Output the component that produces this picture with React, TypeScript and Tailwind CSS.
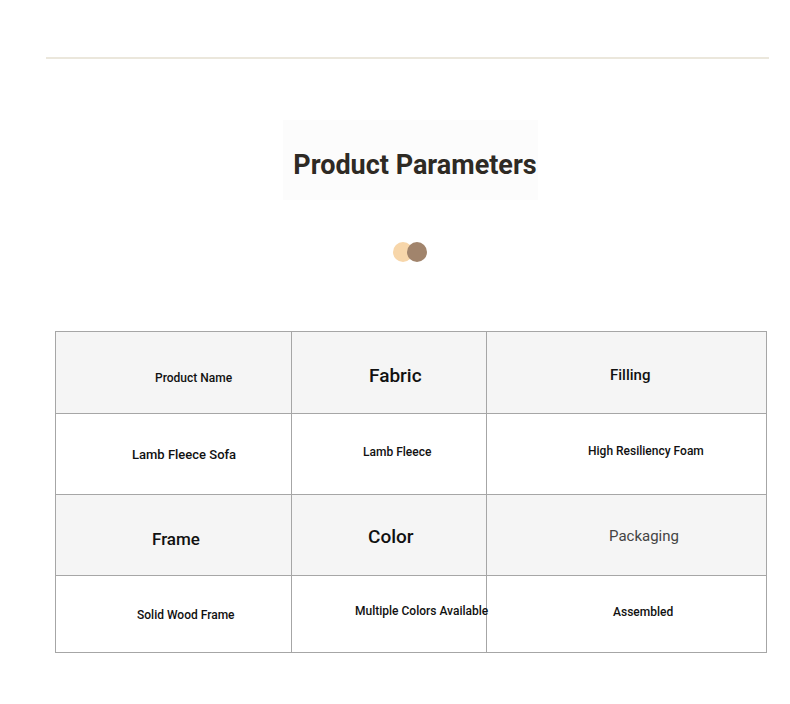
import React from "react";

type Cell = {
  text: string;
  cls: string;
  pos: string;
};

const rows: { bg: string; h: string; cells: Cell[] }[] = [
  {
    bg: "bg-[#f5f5f5]",
    h: "h-[82px]",
    cells: [
      { text: "Product Name", cls: "text-[12px] font-medium text-[#111]", pos: "pl-[99px] pt-[10px]" },
      { text: "Fabric", cls: "text-[19px] font-medium text-[#111]", pos: "pl-[77px] pt-[8px]" },
      { text: "Filling", cls: "text-[15px] font-medium text-[#111]", pos: "pl-[123px] pt-[5px]" },
    ],
  },
  {
    bg: "bg-white",
    h: "h-[81px]",
    cells: [
      { text: "Lamb Fleece Sofa", cls: "text-[13px] font-medium text-[#111]", pos: "pl-[76px] pt-[1px]" },
      { text: "Lamb Fleece", cls: "text-[12px] font-medium text-[#111]", pos: "pl-[71px] pb-[4px]" },
      { text: "High Resiliency Foam", cls: "text-[12px] font-medium text-[#111]", pos: "pl-[101px] pb-[6px]" },
    ],
  },
  {
    bg: "bg-[#f5f5f5]",
    h: "h-[81px]",
    cells: [
      { text: "Frame", cls: "text-[17px] font-medium text-[#111]", pos: "pl-[96px] pt-[10px]" },
      { text: "Color", cls: "text-[19px] font-medium text-[#111]", pos: "pl-[76px] pt-[5px]" },
      { text: "Packaging", cls: "text-[15px] font-normal text-[#444]", pos: "pl-[122px] pt-[2px]" },
    ],
  },
  {
    bg: "bg-white",
    h: "h-[77px]",
    cells: [
      { text: "Solid Wood Frame", cls: "text-[12px] font-medium text-[#111]", pos: "pl-[81px] pt-[2px]" },
      { text: "Multiple Colors Available", cls: "text-[12px] font-medium text-[#111]", pos: "pl-[63px] pb-[7px]" },
      { text: "Assembled", cls: "text-[12px] font-medium text-[#111]", pos: "pl-[126px] pb-[4px]" },
    ],
  },
];

export default function App() {
  return (
    <div className="min-h-screen bg-white font-['Roboto','Liberation_Sans',sans-serif]">
      <div className="pt-[57px] pl-[46px]">
        <div className="h-[2px] w-[723px] bg-[#ebe7dc]" />
      </div>

      <div className="mt-[61px] ml-[283px] w-[255px] h-[80px] bg-[#fcfcfc] flex items-center justify-center pt-[10px] pl-[9px]">
        <h2 className="text-[27px] font-bold text-[#2e2a24] whitespace-nowrap">Product Parameters</h2>
      </div>

      <div className="mt-[42px] ml-[393px] flex">
        <span className="w-[20px] h-[20px] rounded-full bg-[#f7d6aa]" />
        <span className="w-[20px] h-[20px] rounded-full bg-[#a1846c] -ml-[6px]" />
      </div>

      <div className="mt-[69px] ml-[55px] w-[712px] border-l border-t border-[#a6a6a6] grid grid-cols-[236px_195px_280px]">
        {rows.map((row, ri) =>
          row.cells.map((c, ci) => (
            <div
              key={`${ri}-${ci}`}
              className={`${row.bg} ${row.h} ${c.pos} border-r border-b border-[#a6a6a6] flex items-center justify-start whitespace-nowrap`}
            >
              <span className={`${c.cls} relative z-10`}>{c.text}</span>
            </div>
          ))
        )}
      </div>
    </div>
  );
}
